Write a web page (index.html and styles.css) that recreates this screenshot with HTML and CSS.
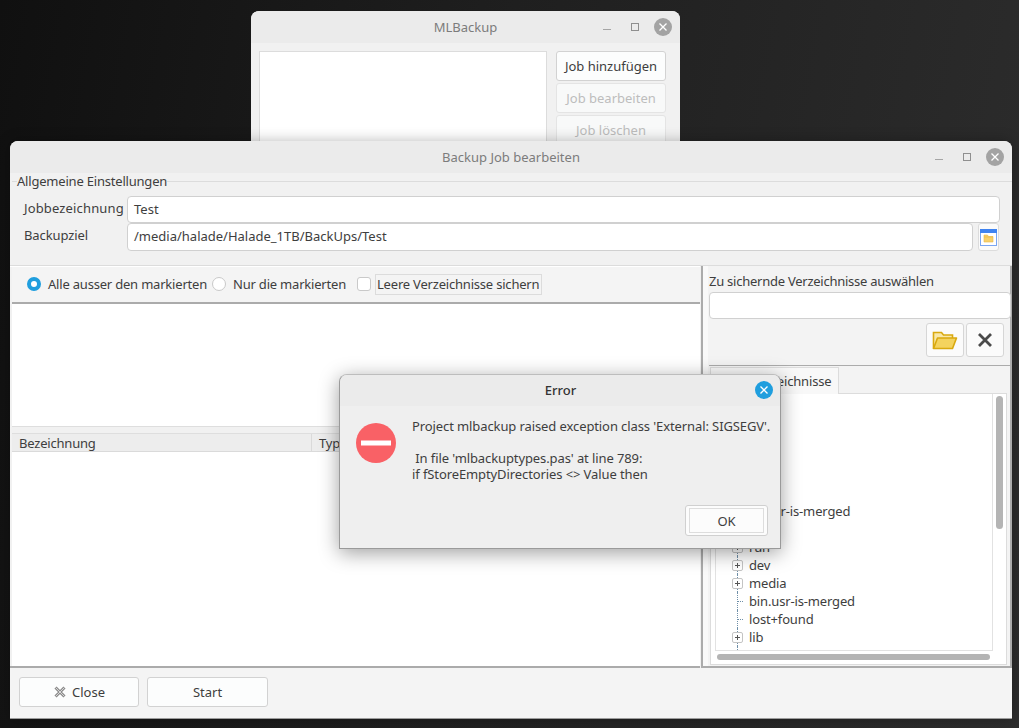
FILE: index.html
```html
<!DOCTYPE html>
<html lang="de">
<head>
<meta charset="utf-8">
<title>MLBackup</title>
<link rel="stylesheet" href="styles.css">
</head>
<body>
<main class="desktop">

  <section class="window win-main">
    <header class="titlebar">
      <span></span>
      <h1 class="title">MLBackup</h1>
      <div class="controls">
        <svg class="ctl" viewBox="0 0 18 18"><path d="M5 11.500h8" stroke="#a5a5a5" fill="none"/></svg>
        <svg class="ctl" viewBox="0 0 18 18"><rect x="5.500" y="5.500" width="7" height="7" stroke="#8f8f8f" fill="none"/></svg>
        <svg class="ctl" viewBox="0 0 18 18"><circle cx="9" cy="9" r="9" fill="#a3a3a3"/><path d="M5.500 5.500l7 7M12.500 5.500l-7 7" stroke="#fff" stroke-width="1.300" fill="none"/></svg>
      </div>
    </header>
    <div class="main-body">
      <div class="job-list"></div>
      <div class="main-actions">
        <button class="btn">Job hinzufügen</button>
        <button class="btn is-disabled">Job bearbeiten</button>
        <button class="btn is-disabled">Job löschen</button>
      </div>
    </div>
  </section>

  <section class="window win-job">
    <header class="titlebar">
      <span></span>
      <h1 class="title">Backup Job bearbeiten</h1>
      <div class="controls">
        <svg class="ctl" viewBox="0 0 18 18"><path d="M5 11.500h8" stroke="#a5a5a5" fill="none"/></svg>
        <svg class="ctl" viewBox="0 0 18 18"><rect x="5.500" y="5.500" width="7" height="7" stroke="#8f8f8f" fill="none"/></svg>
        <svg class="ctl" viewBox="0 0 18 18"><circle cx="9" cy="9" r="9" fill="#a3a3a3"/><path d="M5.500 5.500l7 7M12.500 5.500l-7 7" stroke="#fff" stroke-width="1.300" fill="none"/></svg>
      </div>
    </header>

    <div class="group">
      <div class="legend">Allgemeine Einstellungen</div>
      <div class="form-row row-name">
        <label class="form-label">Jobbezeichnung</label>
        <div class="field">Test</div>
      </div>
      <div class="form-row row-target">
        <label class="form-label">Backupziel</label>
        <div class="field">/media/halade/Halade_1TB/BackUps/Test</div>
        <button class="pick-btn" aria-label="Verzeichnis wählen">
          <svg width="17" height="18" viewBox="0 0 17 18">
            <rect x="0.500" y="1.500" width="16" height="16" fill="#fff" stroke="#7aa6f2"/>
            <rect x="0" y="1" width="17" height="4" fill="#3f83f0"/>
            <path d="M4 7h3.500l1 1.500H13V14H4z" fill="#f8d06a" stroke="#e8b84a" stroke-width="0.600"/>
            <path d="M4 9h9" stroke="#e9b746" stroke-width="0.700"/>
          </svg>
        </button>
      </div>
    </div>

    <div class="panes">
      <div class="pane-left">
        <div class="options">
          <label class="option opt-all"><span class="radio is-on"></span>Alle ausser den markierten</label>
          <label class="option opt-only"><span class="radio"></span>Nur die markierten</label>
          <span class="check"></span>
          <span class="check-label">Leere Verzeichnisse sichern</span>
        </div>
        <div class="dir-list"></div>
        <div class="table">
          <div class="thead">
            <span class="th th-name">Bezeichnung</span>
            <span class="th">Typ</span>
          </div>
        </div>
      </div>
      <div class="splitter"></div>
      <div class="pane-right">
        <div class="dir-label">Zu sichernde Verzeichnisse auswählen</div>
        <div class="field dir-field"></div>
        <div class="dir-actions">
          <button class="tool-btn" aria-label="Öffnen">
            <svg width="26" height="20" viewBox="0 0 26 20">
              <path d="M1.500 18.500V2.500h8l2 2.500h9v3" fill="#f9e8a8" stroke="#d9a90f" stroke-width="1.600"/>
              <path d="M1.500 18.500l4-10.500h19l-4 10.500z" fill="#f4d35e" stroke="#d9a90f" stroke-width="1.600" stroke-linejoin="round"/>
            </svg>
          </button>
          <button class="tool-btn" aria-label="Entfernen">
            <svg width="16" height="16" viewBox="0 0 16 16"><path d="M2 2l12 12M14 2L2 14" stroke="#4a4a4a" stroke-width="2.800" fill="none"/></svg>
          </button>
        </div>
        <div class="tabs">
          <div class="tabstrip"><span class="tab">Verzeichnisse</span></div>
          <div class="tree-frame">
            <div class="tree">
              <div class="node has-kids"><span class="exp"></span></div>
              <div class="node has-kids"><span class="exp"></span></div>
              <div class="node has-kids"><span class="exp"></span></div>
              <div class="node has-kids"><span class="exp"></span></div>
              <div class="node has-kids"><span class="exp"></span></div>
              <div class="node has-kids"><span class="exp"></span></div>
              <div class="node"><span class="twig"></span>lib.usr-is-merged</div>
              <div class="node has-kids"><span class="exp"></span></div>
              <div class="node has-kids"><span class="exp"></span>run</div>
              <div class="node has-kids"><span class="exp"></span>dev</div>
              <div class="node has-kids"><span class="exp"></span>media</div>
              <div class="node"><span class="twig"></span>bin.usr-is-merged</div>
              <div class="node"><span class="twig"></span>lost+found</div>
              <div class="node has-kids"><span class="exp"></span>lib</div>
              <div class="node has-kids"><span class="exp"></span></div>
            </div>
            <div class="vbar"><span class="vthumb"></span></div>
            <div class="hbar"><span class="hthumb"></span></div>
          </div>
        </div>
      </div>
    </div>

    <footer class="job-footer">
      <button class="btn foot-btn">
        <svg width="14" height="14" viewBox="0 0 14 14"><path d="M2.500 2.500l9 9M11.500 2.500l-9 9" stroke="#8c8c8c" stroke-width="3" fill="none"/><path d="M2.500 2.500l9 9M11.500 2.500l-9 9" stroke="#d6d6d6" stroke-width="1" fill="none"/></svg>
        Close
      </button>
      <button class="btn foot-btn">Start</button>
    </footer>
  </section>

  <section class="window dialog">
    <header class="titlebar dialog-bar">
      <span></span>
      <h1 class="title dialog-title">Error</h1>
      <div class="controls">
        <svg class="ctl" viewBox="0 0 18 18"><circle cx="9" cy="9" r="9" fill="#1f9ede"/><path d="M5.500 5.500l7 7M12.500 5.500l-7 7" stroke="#fff" stroke-width="1.300" fill="none"/></svg>
      </div>
    </header>
    <div class="dialog-body">
      <svg class="stop" width="40" height="40" viewBox="0 0 40 40"><circle cx="20" cy="20" r="20" fill="#f96166"/><rect x="5" y="17.500" width="30" height="5" fill="#fff"/></svg>
      <p class="message">Project mlbackup raised exception class 'External: SIGSEGV'.<br><br>&nbsp;In file 'mlbackuptypes.pas' at line 789:<br>if fStoreEmptyDirectories &lt;&gt; Value then</p>
    </div>
    <div class="dialog-actions">
      <button class="ok-btn"><span class="ok-focus">OK</span></button>
    </div>
  </section>

</main>
</body>
</html>
```

FILE: styles.css
```css
* { box-sizing: border-box; }

html, body {
  margin: 0;
  height: 100%;
}

body {
  font-family: "Noto Sans", "DejaVu Sans", sans-serif;
  font-size: 13px;
  color: #3e3e3e;
  overflow: hidden;
}

.desktop {
  position: relative;
  width: 1019px;
  height: 728px;
  overflow: hidden;
  background: linear-gradient(100deg, #101010 0%, #1f1f1f 45%, #2d2d2d 100%);
}

.window {
  position: absolute;
  display: flex;
  flex-direction: column;
  background: #f1f1f1;
  border-radius: 8px 8px 0 0;
  overflow: hidden;
}

.win-main {
  left: 251px;
  top: 11px;
  width: 429px;
  height: 180px;
}

.win-job {
  left: 10px;
  top: 141px;
  width: 1002px;
  height: 578px;
  border-bottom: 1px solid #9c9c9c;
  box-shadow: 0 0 14px rgba(0, 0, 0, 0.28);
}

.dialog {
  z-index: 2;
  left: 339px;
  top: 374px;
  width: 442px;
  height: 175px;
  background: #efefef;
  border: 1px solid #9a9a9a;
  border-top-color: #bdbdbd;
  box-shadow: 0 4px 20px rgba(0, 0, 0, 0.38);
}

.titlebar {
  flex: none;
  display: grid;
  grid-template-columns: 1fr auto 1fr;
  align-items: center;
  height: 32px;
  padding: 0 8px;
  background: #ebebeb;
}

.title {
  margin: 0;
  font-size: 13px;
  font-weight: 400;
  color: #7c7c7c;
}

.controls {
  display: flex;
  justify-content: flex-end;
  gap: 10px;
}

.ctl {
  display: block;
  width: 18px;
  height: 18px;
}

.btn {
  font: inherit;
  color: #3e3e3e;
  background: #fcfdfd;
  border: 1px solid #d2d2d2;
  border-radius: 3px;
  padding: 0;
}

.btn.is-disabled {
  color: #bdbdbd;
  background: #f8f9f9;
  border-color: #e4e4e4;
}

/* main window */
.main-body {
  flex: 1;
  display: flex;
  gap: 9px;
  padding: 8px 14px 0 8px;
}

.job-list {
  width: 288px;
  height: 140px;
  background: #fff;
  border: 1px solid #dcdcdc;
}

.main-actions {
  width: 110px;
  display: flex;
  flex-direction: column;
  gap: 2px;
}

.main-actions .btn {
  height: 30px;
}

/* group box */
.group {
  flex: none;
  height: 84px;
  margin-left: 2px;
  margin-top: 8px;
  border-top: 1px solid #dcdcdc;
  padding-right: 12px;
}

.legend {
  width: max-content;
  height: 16px;
  margin: -9px 0 7px 5px;
  line-height: 16px;
  background: #f1f1f1;
  letter-spacing: -0.2px;
}

.form-row {
  display: flex;
  align-items: flex-start;
}

.form-label {
  flex: none;
  width: 115px;
  padding-left: 12px;
  line-height: 24px;
  white-space: nowrap;
}

.row-name .form-label { letter-spacing: 0.15px; }

.row-target .form-label {
  line-height: 25px;
  letter-spacing: -0.1px;
}

.field {
  flex: 1;
  min-width: 0;
  background: #fff;
  border: 1px solid #d0d0d0;
  border-radius: 4px;
  padding: 0 6px;
  line-height: 25px;
}

.row-name .field { height: 27px; }

.row-target .field {
  height: 28px;
  line-height: 24px;
}

.pick-btn {
  flex: none;
  display: flex;
  align-items: center;
  justify-content: center;
  width: 21px;
  height: 28px;
  margin-left: 5px;
  margin-right: 1px;
  padding: 0;
  background: #fbfbfb;
  border: 1px solid #dcdcdc;
  border-radius: 3px;
}

/* panes */
.panes {
  flex: 1;
  min-height: 0;
  display: flex;
  border-top: 1px solid #dcdcdc;
  box-shadow: inset 0 1px 0 #fff;
}

.pane-left {
  flex: none;
  width: 690px;
  display: flex;
  flex-direction: column;
  padding: 1px 0 0 2px;
  border-bottom: 2px solid #ababab;
}

.options {
  flex: none;
  display: flex;
  align-items: center;
  height: 37px;
  padding: 0 0 1px 15px;
  background: #f4f4f4;
  border-bottom: 2px solid #ababab;
}

.option {
  display: flex;
  align-items: center;
  gap: 7px;
  letter-spacing: -0.2px;
  white-space: nowrap;
}

.opt-all { width: 185px; }
.opt-only { width: 145px; }

.radio {
  flex: none;
  width: 14px;
  height: 14px;
  border-radius: 50%;
  background: #fff;
  border: 1px solid #c9c9c9;
}

.radio.is-on {
  border: 4.500px solid #1f9ede;
}

.check {
  flex: none;
  width: 14px;
  height: 14px;
  margin-right: 4px;
  background: #fff;
  border: 1px solid #c9c9c9;
  border-radius: 3px;
}

.check-label {
  width: 167px;
  height: 21px;
  padding-left: 1px;
  line-height: 19px;
  border: 1px solid #dcdcdc;
  letter-spacing: -0.2px;
  white-space: nowrap;
}

.dir-list {
  flex: none;
  height: 123px;
  background: #fff;
  border-bottom: 1px solid #dedede;
}

.table {
  flex: 1;
  margin-top: 6px;
  background: #fff;
}

.thead {
  display: flex;
  height: 19px;
  background: #ededed;
  border-top: 1px solid #dedede;
  border-bottom: 1px solid #dadada;
}

.th {
  padding-left: 7px;
  line-height: 18px;
  letter-spacing: -0.2px;
}

.th-name {
  width: 300px;
  border-right: 1px solid #dadada;
}

.splitter {
  flex: none;
  width: 3px;
  padding: 0;
  background: #ababab;
  border-left: 1px solid #f1f1f1;
}

.pane-right {
  flex: 1;
  min-width: 0;
  display: flex;
  flex-direction: column;
  padding: 0 0 0 6px;
  background: #f3f3f3;
  border-right: 2px solid #ababab;
  border-bottom: 2px solid #ababab;
  box-shadow: inset 5px 0 0 #f9f9f9;
}

.dir-label {
  height: 26px;
  padding-top: 6px;
  line-height: 18px;
  letter-spacing: -0.25px;
  white-space: nowrap;
}

.dir-field {
  flex: none;
  height: 27px;
  margin-right: -1px;
}

.dir-actions {
  flex: none;
  display: flex;
  justify-content: flex-end;
  gap: 2px;
  height: 47px;
  padding: 4px 6px 0 0;
  border-bottom: 1px solid #ababab;
}

.tool-btn {
  display: flex;
  align-items: center;
  justify-content: center;
  width: 38px;
  height: 34px;
  padding: 0;
  background: #fbfbfb;
  border: 1px solid #d6d6d6;
  border-radius: 3px;
}

.tabs {
  flex: 1;
  min-height: 0;
  display: flex;
  flex-direction: column;
}

.tabstrip {
  flex: none;
  height: 28px;
  padding: 1px 0 0 1px;
  margin-bottom: -1px;
  position: relative;
}

.tab {
  display: block;
  width: 129px;
  height: 27px;
  padding: 0 0 0 40px;
  line-height: 26px;
  background: #f8f8f8;
  border: 1px solid #dcdcdc;
  border-bottom: 0;
  letter-spacing: -0.15px;
}

.tree-frame {
  flex: 1;
  min-height: 0;
  display: grid;
  grid-template-columns: 1fr 13px;
  grid-template-rows: 1fr 13px;
  margin: 0 3px 1px 1px;
  padding: 0 0 0 4px;
  background: #fff;
  border: 1px solid #dcdcdc;
}

.tree {
  overflow: hidden;
  padding-top: 0;
  border: 1px solid #e2e2e2;
  border-top: 0;
  background: #fff;
}

.node {
  position: relative;
  display: flex;
  align-items: center;
  height: 18px;
  padding-left: 16px;
  white-space: nowrap;
  letter-spacing: -0.15px;
}

.node::before {
  content: "";
  position: absolute;
  left: 21px;
  top: 0;
  bottom: 0;
  border-left: 1px dotted #6f8fa8;
}

.exp {
  position: relative;
  flex: none;
  width: 11px;
  height: 11px;
  margin-right: 6px;
  background: #fff linear-gradient(#555, #555) center / 5px 1px no-repeat;
  border: 1px solid #c4c4c4;
  border-radius: 2px;
}

.exp::after {
  content: "";
  position: absolute;
  left: 4px;
  top: 2px;
  width: 1px;
  height: 5px;
  background: #555;
}

.twig {
  flex: none;
  width: 11px;
  margin-right: 6px;
  padding-left: 6px;
}

.twig::after {
  content: "";
  display: block;
  width: 5px;
  border-top: 1px dotted #6f8fa8;
}

.vbar {
  padding: 2px 3px 0 3px;
  background: #fff;
}

.vthumb {
  display: block;
  width: 7px;
  height: 133px;
  background: #b4b4b4;
  border-radius: 4px;
}

.hbar {
  grid-column: 1 / 3;
  padding: 3px 16px 0 2px;
}

.hthumb {
  display: block;
  height: 6px;
  background: #b4b4b4;
  border-radius: 3px;
}

/* footer */
.job-footer {
  flex: none;
  display: flex;
  gap: 8px;
  height: 50px;
  padding: 9px;
  background: #f4f4f4;
}

.foot-btn {
  display: flex;
  align-items: center;
  justify-content: center;
  gap: 5px;
  width: 120px;
  height: 30px;
}

.foot-btn + .foot-btn { width: 121px; }

/* dialog */
.dialog-bar {
  height: 31px;
  padding: 0 7px 2px 8px;
}

.dialog-title {
  color: #333;
  font-weight: 500;
}

.dialog-body {
  flex: 1;
  display: flex;
  align-items: flex-start;
  gap: 16px;
  padding: 17px 0 0 16px;
}

.stop {
  flex: none;
}

.message {
  margin: -5px 0 0 0;
  line-height: 16px;
  letter-spacing: -0.1px;
  white-space: nowrap;
}

.dialog-actions {
  flex: none;
  display: flex;
  justify-content: flex-end;
  padding: 0 12px 12px 0;
}

.ok-btn {
  width: 83px;
  height: 31px;
  padding: 2px 3px;
  font: inherit;
  color: #3e3e3e;
  background: #fcfcfc;
  border: 1px solid #d0d0d0;
  border-radius: 3px;
}

.ok-focus {
  display: flex;
  align-items: center;
  justify-content: center;
  height: 100%;
  border: 1px solid #dddddd;
}
```
